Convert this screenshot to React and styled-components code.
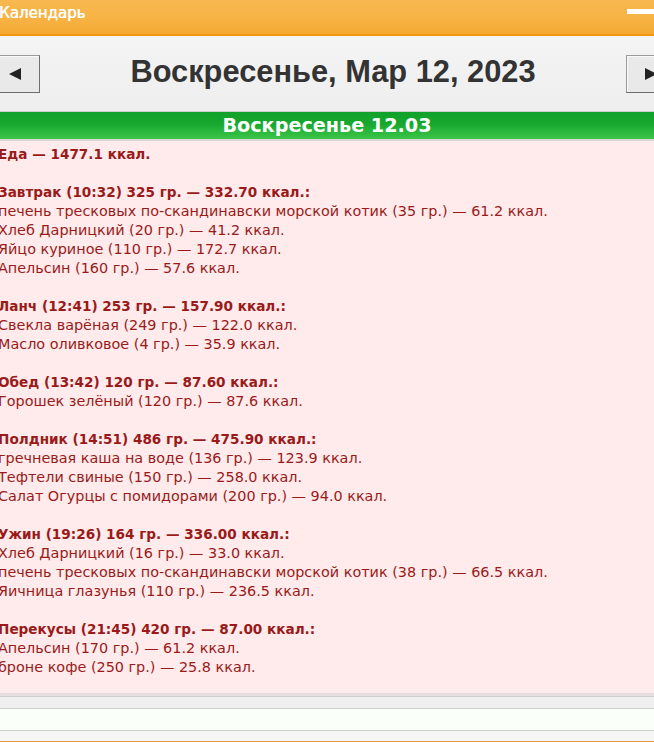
import React from "react"
import styled, { createGlobalStyle } from "styled-components"

const Global = createGlobalStyle`
  html, body { margin: 0; padding: 0; background: #fff; }
  body { width: 654px; height: 742px; overflow: hidden; }
`

const Window = styled.div`
  width: 654px;
  height: 742px;
  display: flex;
  flex-direction: column;
  overflow: hidden;
  background: #f6f6f6;
  border-bottom: 1px solid #e0a040;
  box-sizing: border-box;
`

const TitleBar = styled.div`
  height: 34px;
  flex: none;
  display: flex;
  align-items: center;
  justify-content: space-between;
  background: linear-gradient(to bottom, #f8b850 0%, #f7b446 50%, #f4a933 100%);
  border-bottom: 2px solid #ef9810;
`

const WinTitle = styled.div`
  font-family: "DejaVu Sans", Verdana, sans-serif;
  font-size: 15px;
  font-weight: normal;
  color: #fff;
  text-shadow: 0.4px 0 0 #fff;
  margin-left: -1px;
  margin-top: -9px;
`

const MinBtn = styled.div`
  width: 27px;
  height: 5px;
  background: #fff;
  margin-top: -11px;
`

const NavBar = styled.div`
  height: 75px;
  flex: none;
  display: flex;
  align-items: center;
  justify-content: space-between;
  background: linear-gradient(to bottom, #f4f4f4, #eeeeee);
  border-bottom: 1px solid #cfcfcf;
`

const ArrowButton = styled.div`
  width: 50px;
  height: 38px;
  box-sizing: border-box;
  display: flex;
  align-items: center;
  justify-content: center;
  background: #e9e9e9;
  border: 1px solid #9a9a9a;
  border-right-color: #6e6e6e;
  border-bottom-color: #6e6e6e;
  box-shadow: inset 1px 1px 0 #fafafa;
  margin: ${p => (p.$side === "left" ? "0 0 0 -10px" : "0 -22px 0 0")};
`

const DayTitle = styled.h1`
  margin: 0;
  font-family: "Liberation Sans", Arial, sans-serif;
  font-size: 30.8px;
  font-weight: bold;
  color: #333;
  margin-top: -4px;
`

const DayBar = styled.div`
  height: 27px;
  flex: none;
  display: flex;
  align-items: center;
  justify-content: center;
  background: linear-gradient(to bottom, #0fa12a 0%, #18a82f 45%, #3dc64a 100%);
  border-bottom: 2px solid #d8d8d8;
  font-family: "DejaVu Sans", Verdana, sans-serif;
  font-size: 19.2px;
  font-weight: bold;
  color: #fff;
`

const Diary = styled.div`
  flex: none;
  height: 555px;
  box-sizing: border-box;
  background: #ffebeb;
  border-bottom: 3px solid #e6dede;
  padding: 4px 0 0 0;
  margin-left: -2px;
  font-family: "DejaVu Sans", Verdana, sans-serif;
  font-size: 14.4px;
  line-height: 19px;
  color: #9a1a1a;
`

const Line = styled.div`
  white-space: nowrap;
  font-weight: ${p => (p.$bold ? "bold" : "normal")};
  font-size: ${p => (p.$bold ? "13.6px" : "inherit")};
  margin-top: ${p => (p.$gap ? "19px" : "0")};
`

const Strip = styled.div`
  flex: none;
  height: ${p => p.$h}px;
  background: ${p => p.$bg};
  border-top: 1px solid #cfcfcf;
`

const Arrow = ({ dir }) => (
  <svg width="14" height="14" viewBox="0 0 14 14">
    {dir === "left" ? (
      <polygon points="1,7 13,1 13,13" fill="#222" />
    ) : (
      <polygon points="13,7 1,1 1,13" fill="#222" />
    )}
  </svg>
)

const meals = [
  {
    head: "Завтрак (10:32) 325 гр. — 332.70 ккал.:",
    items: [
      "печень тресковых по-скандинавски морской котик (35 гр.) — 61.2 ккал.",
      "Хлеб Дарницкий (20 гр.) — 41.2 ккал.",
      "Яйцо куриное (110 гр.) — 172.7 ккал.",
      "Апельсин (160 гр.) — 57.6 ккал.",
    ],
  },
  {
    head: "Ланч (12:41) 253 гр. — 157.90 ккал.:",
    items: ["Свекла варёная (249 гр.) — 122.0 ккал.", "Масло оливковое (4 гр.) — 35.9 ккал."],
  },
  {
    head: "Обед (13:42) 120 гр. — 87.60 ккал.:",
    items: ["Горошек зелёный (120 гр.) — 87.6 ккал."],
  },
  {
    head: "Полдник (14:51) 486 гр. — 475.90 ккал.:",
    items: [
      "гречневая каша на воде (136 гр.) — 123.9 ккал.",
      "Тефтели свиные (150 гр.) — 258.0 ккал.",
      "Салат Огурцы с помидорами (200 гр.) — 94.0 ккал.",
    ],
  },
  {
    head: "Ужин (19:26) 164 гр. — 336.00 ккал.:",
    items: [
      "Хлеб Дарницкий (16 гр.) — 33.0 ккал.",
      "печень тресковых по-скандинавски морской котик (38 гр.) — 66.5 ккал.",
      "Яичница глазунья (110 гр.) — 236.5 ккал.",
    ],
  },
  {
    head: "Перекусы (21:45) 420 гр. — 87.00 ккал.:",
    items: ["Апельсин (170 гр.) — 61.2 ккал.", "броне кофе (250 гр.) — 25.8 ккал."],
  },
]

export default function App() {
  return (
    <>
      <Global />
      <Window>
        <TitleBar>
          <WinTitle>Календарь</WinTitle>
          <MinBtn />
        </TitleBar>
        <NavBar>
          <ArrowButton $side="left">
            <Arrow dir="left" />
          </ArrowButton>
          <DayTitle>Воскресенье, Мар 12, 2023</DayTitle>
          <ArrowButton $side="right">
            <Arrow dir="right" />
          </ArrowButton>
        </NavBar>
        <DayBar>Воскресенье 12.03</DayBar>
        <Diary>
          <Line $bold>Еда — 1477.1 ккал.</Line>
          {meals.map(m => (
            <React.Fragment key={m.head}>
              <Line $bold $gap>{m.head}</Line>
              {m.items.map((it, i) => (
                <Line key={i}>{it}</Line>
              ))}
            </React.Fragment>
          ))}
        </Diary>
        <Strip $h={11} $bg="#efefef" />
        <Strip $h={21} $bg="#fafffa" />
        <Strip $h={9} $bg="#f6f6f6" />
      </Window>
    </>
  )
}
